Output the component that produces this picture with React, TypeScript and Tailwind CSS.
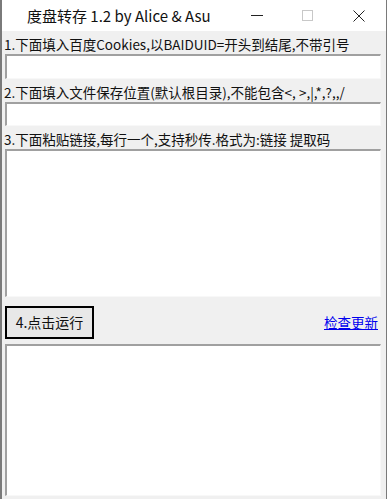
import { useState } from 'react';

const font = { fontFamily: '"Noto Sans CJK SC", "Noto Sans", sans-serif' };

function Field({ className }: { className: string }) {
  return (
    <div
      className={`ml-[3px] mr-[5px] bg-white border-t-2 border-l-2 border-t-[#a0a0a0] border-l-[#a0a0a0] border-r border-b border-r-[#f8f8f8] border-b-[#f8f8f8] ${className}`}
    />
  );
}

export default function App() {
  const [hover, setHover] = useState(false);

  return (
    <div
      className="w-[387px] h-[499px] bg-[#f0f0f0] border-l-2 border-r border-[#7a7a7a] flex flex-col text-[#111] overflow-hidden"
      style={font}
    >
      {/* Title bar */}
      <div className="h-[31px] bg-white flex items-center shrink-0">
        <span className="ml-[25px] text-[15px] leading-none">度盘转存 1.2 by Alice &amp; Asu</span>
        <div className="ml-auto flex items-center mr-[2px]">
          <div className="w-[51px] flex justify-center">
            <div className="w-[12px] h-px bg-[#222]" />
          </div>
          <div className="w-[51px] flex justify-center">
            <div className="w-[11px] h-[11px] border border-[#c8c8c8]" />
          </div>
          <div className="w-[51px] flex justify-center">
            <svg width="12" height="12" viewBox="0 0 12 12">
              <path d="M0.5 0.5 L11.5 11.5 M11.5 0.5 L0.5 11.5" stroke="#222" strokeWidth="1" />
            </svg>
          </div>
        </div>
      </div>

      <div className="pt-[4px] px-[2px] text-[13.5px] leading-[18px]">
        1.下面填入百度Cookies,以BAIDUID=开头到结尾,不带引号
      </div>
      <Field className="h-[25px] mt-[1px]" />

      <div className="pt-[4px] px-[2px] text-[13.5px] leading-[18px]">
        2.下面填入文件保存位置(默认根目录),不能包含&lt;, &gt;,|,*,?,,/
      </div>
      <Field className="h-[24px] mt-[1px]" />

      <div className="pt-[4px] px-[2px] text-[13.5px] leading-[18px]">
        3.下面粘贴链接,每行一个,支持秒传.格式为:链接 提取码
      </div>
      <Field className="h-[148px] mt-[1px]" />

      <div className="flex items-center justify-between pl-[3px] pr-[5px] mt-[9px] mb-[5px]">
        <button
          onMouseEnter={() => setHover(true)}
          onMouseLeave={() => setHover(false)}
          className={`w-[89px] h-[33px] border-2 border-black text-[14px] ${hover ? 'bg-[#e5f1fb]' : 'bg-[#e8e8e8]'}`}
          style={font}
        >
          4.点击运行
        </button>
        <a href="#" className="text-[13.5px] text-[#0000ee] underline mr-[3px]">
          检查更新
        </a>
      </div>

      <Field className="h-[152px]" />
    </div>
  );
}
